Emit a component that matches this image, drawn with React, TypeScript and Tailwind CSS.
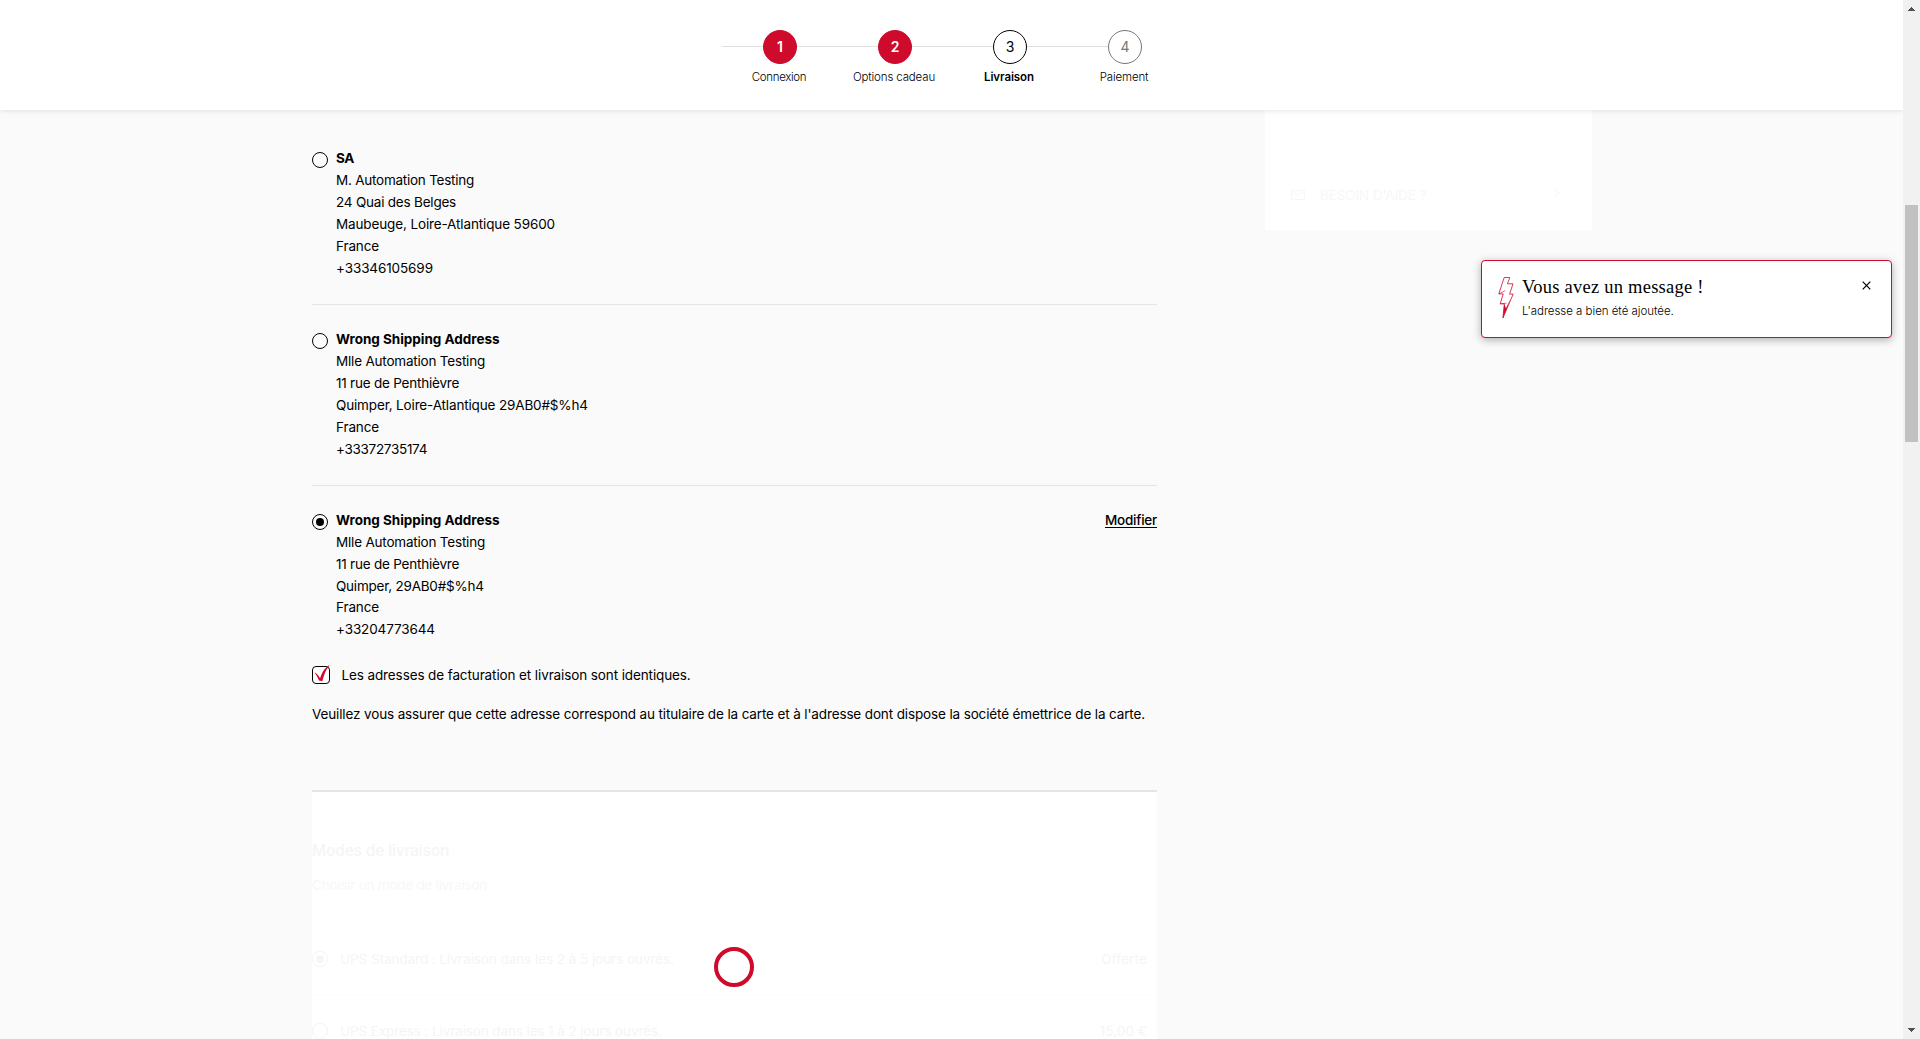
import clsx from "clsx";
import type { ReactNode } from "react";

type Line = { text: string; tracking: string };
type Address = { title: Line; lines: Line[]; selected?: boolean };

const addresses: Address[] = [
  {
    title: { text: "SA", tracking: "tracking-[-0.3px]" },
    lines: [
      { text: "M. Automation Testing", tracking: "tracking-[-0.24px]" },
      { text: "24 Quai des Belges", tracking: "tracking-[-0.21px]" },
      { text: "Maubeuge, Loire-Atlantique 59600", tracking: "tracking-[-0.13px]" },
      { text: "France", tracking: "tracking-[-0.13px]" },
      { text: "+33346105699", tracking: "tracking-[-0.11px]" },
    ],
  },
  {
    title: { text: "Wrong Shipping Address", tracking: "tracking-[-0.02px]" },
    lines: [
      { text: "Mlle Automation Testing", tracking: "tracking-[-0.2px]" },
      { text: "11 rue de Penthièvre", tracking: "tracking-[-0.22px]" },
      { text: "Quimper, Loire-Atlantique 29AB0#$%h4", tracking: "tracking-[-0.15px]" },
      { text: "France", tracking: "tracking-[-0.13px]" },
      { text: "+33372735174", tracking: "tracking-[-0.3px]" },
    ],
  },
  {
    title: { text: "Wrong Shipping Address", tracking: "tracking-[-0.02px]" },
    lines: [
      { text: "Mlle Automation Testing", tracking: "tracking-[-0.2px]" },
      { text: "11 rue de Penthièvre", tracking: "tracking-[-0.22px]" },
      { text: "Quimper, 29AB0#$%h4", tracking: "tracking-[-0.22px]" },
      { text: "France", tracking: "tracking-[-0.13px]" },
      { text: "+33204773644", tracking: "tracking-[-0.12px]" },
    ],
    selected: true,
  },
];

function Radio({ checked, faded }: { checked?: boolean; faded?: boolean }) {
  return (
    <span
      className={clsx(
        "flex size-4 shrink-0 items-center justify-center rounded-full border",
        faded ? "border-[#f5f5f5]" : "border-black bg-white/40",
      )}
    >
      {checked && <span className={clsx("size-2 rounded-full", faded ? "bg-[#f5f5f5]" : "bg-black")} />}
    </span>
  );
}

function Step({ n, label, circle, text }: { n: number; label: string; circle: string; text: string }) {
  return (
    <li className="flex w-[115px] flex-col items-center">
      <span className={clsx("flex size-[34px] items-center justify-center rounded-full border text-[14px] leading-none", circle)}>
        {n}
      </span>
      <span className={clsx("mr-[2px] mt-1 whitespace-nowrap text-[11.5px] leading-[18px]", text)}>{label}</span>
    </li>
  );
}

function Header() {
  return (
    <header className="relative z-10 flex h-[110px] justify-center bg-white shadow-[0_1px_5px_rgba(0,0,0,0.1)]">
      <div className="relative h-full w-[460px] pt-[30px]">
        <div className="absolute left-[0.5px] top-[46px] h-px w-[386px] bg-[#e0e0e0]" />
        <ol className="relative left-px flex">
          <Step n={1} label="Connexion" circle="border-[#ce0a2d] bg-[#ce0a2d] font-semibold text-white" text="font-[350] tracking-[-0.33px]" />
          <Step n={2} label="Options cadeau" circle="border-[#ce0a2d] bg-[#ce0a2d] font-semibold text-white" text="font-[350] tracking-[-0.15px]" />
          <Step n={3} label="Livraison" circle="border-black bg-white text-black" text="font-semibold tracking-[-0.08px]" />
          <Step n={4} label="Paiement" circle="border-[#767676] bg-white text-[#767676]" text="font-[350] tracking-[-0.15px]" />
        </ol>
      </div>
    </header>
  );
}

function AddressRow({ address }: { address: Address }) {
  return (
    <li className="flex h-[181px] items-start border-[#e5e5e5] pt-[23px] not-last:border-b last:h-[157px]">
      <div className="mt-[5px]">
        <Radio checked={address.selected} />
      </div>
      <div className="ml-2 flex-1 text-[13.5px] leading-[22px]">
        <p className={clsx("font-bold", address.title.tracking)}>{address.title.text}</p>
        {address.lines.map((line, i) => (
          <p key={line.text} className={clsx("whitespace-nowrap", line.tracking, address.selected && i === 3 && "-mt-px")}>
            {line.text}
          </p>
        ))}
      </div>
      {address.selected && (
        <a href="#" className="text-[13.5px] font-medium leading-[22px] tracking-[-0.24px] underline underline-offset-2">
          Modifier
        </a>
      )}
    </li>
  );
}

function ShippingMethod({ checked, price, children }: { checked?: boolean; price: ReactNode; children: ReactNode }) {
  return (
    <div className="flex h-[72px] items-center border-b border-[#fcfcfc] pr-[10px] text-[13.5px] leading-[22px] text-[#f5f5f5]">
      <Radio checked={checked} faded />
      <span className="ml-3 flex-1 whitespace-nowrap">{children}</span>
      {price}
    </div>
  );
}

function HelpCard() {
  return (
    <aside className="ml-[108px] flex h-[120px] w-[327px] items-start bg-white pl-[26px] pr-8 pt-[74px] text-[#f7f7f7]">
      <svg className="mt-[6px] shrink-0" width="14" height="10" viewBox="0 0 14 10" fill="none" stroke="currentColor">
        <rect x="0.5" y="0.5" width="13" height="9" />
        <path d="M1.5 1.5 7 5.2l5.500-3.700" />
      </svg>
      <span className="ml-[15px] flex-1 whitespace-nowrap text-[13.5px] leading-[22px] tracking-[-0.1px]">BESOIN D'AIDE ?</span>
      <svg className="mt-1 shrink-0" width="6" height="10" viewBox="0 0 6 10" fill="none" stroke="currentColor" strokeWidth="1.5">
        <path d="M1 1l4 4-4 4" />
      </svg>
    </aside>
  );
}

function Toast() {
  return (
    <div className="absolute right-[11px] top-[260px] z-20 flex h-[78px] w-[411px] items-start rounded border border-[#ce0a2d] bg-white pl-4 shadow-[0_2px_8px_rgba(0,0,0,0.3)]">
      <svg className="mt-[15px] shrink-0" width="16" height="44" viewBox="0 0 16 44" fill="none" stroke="#ce0a2d" strokeLinejoin="round">
        <path strokeWidth="0.8" d="M6.200 1.500h5.600l-2.400 6.300h5.600l-3.400 10.300h3.600L4.900 42l1.400-14.200H2.200l3-9.900H.8z" />
        <path strokeWidth="0.6" d="M.8 17.900l6.600-3.400M2.200 27.800l6.300-.6" />
        <path fill="#ce0a2d" stroke="none" d="M12.800 22.500 4.900 42.500l1.400-14.700 1.600 4.500z" />
      </svg>
      <div className="ml-2 flex-1 pt-[13px]">
        <p className="font-['Liberation_Serif',serif] text-[18.5px] leading-[27px] tracking-[0.24px]">Vous avez un message !</p>
        <p className="mt-px text-[11.5px] font-[350] leading-[18px] tracking-[-0.03px]">L'adresse a bien été ajoutée.</p>
      </div>
      <svg className="mr-5 mt-5 shrink-0" width="9" height="9" viewBox="0 0 9 9" stroke="black" strokeWidth="1.2">
        <path d="M.7.7l7.600 7.600M8.300.7.7 8.300" />
      </svg>
    </div>
  );
}

function Scrollbar() {
  return (
    <div className="flex h-full w-[17px] flex-col items-center bg-[#f1f1f1]">
      <svg className="shrink-0" width="17" height="17" viewBox="0 0 17 17" fill="#505050" shapeRendering="crispEdges">
        <path d="M8 7h1v1h1v1h1v1h1v1H5v-1h1V9h1V8h1z" />
      </svg>
      <div className="mt-[188px] h-[237px] w-[13px] bg-[#c1c1c1]" />
      <svg className="mt-auto shrink-0" width="17" height="17" viewBox="0 0 17 17" fill="#505050" shapeRendering="crispEdges">
        <path d="M5 6h7v1h-1v1h-1v1H9v1H8V9H7V8H6V7H5z" />
      </svg>
    </div>
  );
}

export default function App() {
  return (
    <div className="flex h-[1039px] w-[1920px] overflow-hidden bg-[#fafafa] font-[Inter,sans-serif] text-black">
      <div className="relative h-full w-[1903px] overflow-hidden">
        <Header />
        <Toast />
        <main className="flex items-start pl-[312px]">
          <div className="w-[845px] pt-[14px]">
            <ul>
              {addresses.map((address, i) => (
                <AddressRow key={i} address={address} />
              ))}
            </ul>

            <label className="mt-[23px] flex h-[18px] items-center">
              <span className="relative size-[18px] rounded-[4px] border border-black bg-white">
                <svg className="absolute -top-[2px] left-px" width="16" height="18" viewBox="0 0 16 18" fill="#ce0a2d">
                  <path d="M.5 7.500c1.500.4 3.300 2 5.600 5.800C8.400 6.300 11.500 2 15.700 0 12.500 4 10.300 8.500 8.300 16.300L5 15.500C3.700 12.500 2.300 9.800.5 7.500z" />
                </svg>
              </span>
              <span className="ml-[11.500px] text-[13.5px] leading-[22px] tracking-[-0.11px]">
                Les adresses de facturation et livraison sont identiques.
              </span>
            </label>

            <p className="mt-[19px] whitespace-nowrap text-[13.5px] leading-[22px] tracking-[-0.134px]">
              Veuillez vous assurer que cette adresse correspond au titulaire de la carte et à l'adresse dont dispose la société
              émettrice de la carte.
            </p>

            <section className="relative mt-[65px] h-[249px] border-t-2 border-[#e5e5e5] bg-white pt-[47px]">
              <h2 className="text-[15.5px] font-medium leading-6 tracking-[-0.15px] text-[#f5f5f5]">Modes de livraison</h2>
              <p className="mt-[11px] text-[13.5px] leading-[22px] tracking-[-0.22px] text-[#f7f7f7]">Choisir un mode de livraison</p>
              <div className="mt-[27px]">
                <ShippingMethod checked price={<span className="tracking-[0.15px]">Offerte</span>}>
                  <span className="tracking-[-0.05px]">UPS Standard : Livraison dans les 2 à 5 jours ouvrés.</span>
                </ShippingMethod>
                <ShippingMethod price={<span className="tracking-[0.08px]">15,00 €</span>}>
                  <span className="tracking-[-0.1px]">UPS Express : Livraison dans les 1 à 2 jours ouvrés.</span>
                </ShippingMethod>
              </div>
              <div className="absolute left-[402px] top-[155px] size-10 rounded-full border-4 border-[#ce0a2d]" />
            </section>
          </div>
          <HelpCard />
        </main>
      </div>
      <Scrollbar />
    </div>
  );
}
